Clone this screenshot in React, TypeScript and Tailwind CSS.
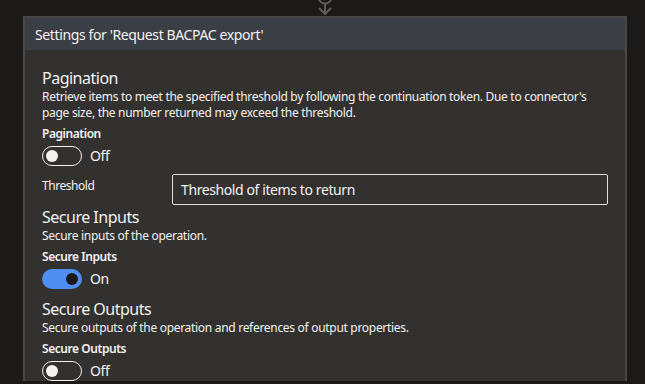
import React from "react";

const font = { fontFamily: '"Segoe UI", "Noto Sans", "Open Sans", sans-serif' };

const Toggle = ({ on }: { on: boolean }) => (
  <div className="mt-[4px] flex h-[20px] items-center gap-[8px]">
    {on ? (
      <div className="flex h-[20px] w-[40px] items-center justify-end rounded-full bg-[#4f8ef0] pr-[4px]">
        <div className="h-[12px] w-[12px] rounded-full bg-[#1b1a19]" />
      </div>
    ) : (
      <div className="flex h-[20px] w-[40px] items-center rounded-full border border-[#f3f2f1] pl-[3px]">
        <div className="h-[12px] w-[12px] rounded-full bg-[#f3f2f1]" />
      </div>
    )}
    <span className="text-[14px] leading-[20px] tracking-[-0.4px]">{on ? "On" : "Off"}</span>
  </div>
);

const Section = ({
  title,
  desc,
  label,
  on,
  className,
}: {
  title: string;
  desc: string;
  label: string;
  on: boolean;
  className?: string;
}) => (
  <div className={className}>
    <div className="text-[16px] leading-[22px] tracking-[-0.5px]">{title}</div>
    <div className="text-[12px] leading-[16px] tracking-[-0.3px]">{desc}</div>
    <div className="mt-[5px] text-[12px] font-semibold leading-[16px] tracking-[-0.45px]">{label}</div>
    <Toggle on={on} />
  </div>
);

export default function App() {
  return (
    <div className="relative h-[384px] w-[645px] overflow-hidden bg-[#1b1a19] text-[#f3f2f1]" style={font}>
      <svg className="absolute left-[313px] top-0" width="24" height="16" viewBox="0 0 24 16" fill="none" stroke="#5e5d5c" strokeWidth="2">
        <circle cx="12" cy="-3" r="6.5" />
        <path d="M12 4v10M6 8l6 6 6-6" />
      </svg>
      <div className="ml-[23px] mt-[16px] w-[604px] border-x-2 border-t-2 border-[#474746] bg-[#323130]">
        <div className="flex h-[32px] items-center bg-[#3b3e44] px-[10px] text-[14px] tracking-[-0.38px]">
          Settings for 'Request BACPAC export'
        </div>
        <div className="px-[17px] pt-[17px]">
          <Section
            title="Pagination"
            desc="Retrieve items to meet the specified threshold by following the continuation token. Due to connector's page size, the number returned may exceed the threshold."
            label="Pagination"
            on={false}
          />
          <div className="mt-[8px] flex">
            <div className="w-[130px] pt-[4px] text-[12px] leading-[16px] tracking-[-0.45px]">Threshold</div>
            <div className="flex h-[31px] flex-1 items-center rounded-[2px] border border-[#e1dfdd] px-[8px] text-[14px] tracking-[-0.4px]">
              Threshold of items to return
            </div>
          </div>
          <Section
            className="mt-[1px]"
            title="Secure Inputs"
            desc="Secure inputs of the operation."
            label="Secure Inputs"
            on={true}
          />
          <Section
            className="mt-[9px]"
            title="Secure Outputs"
            desc="Secure outputs of the operation and references of output properties."
            label="Secure Outputs"
            on={false}
          />
        </div>
      </div>
    </div>
  );
}
